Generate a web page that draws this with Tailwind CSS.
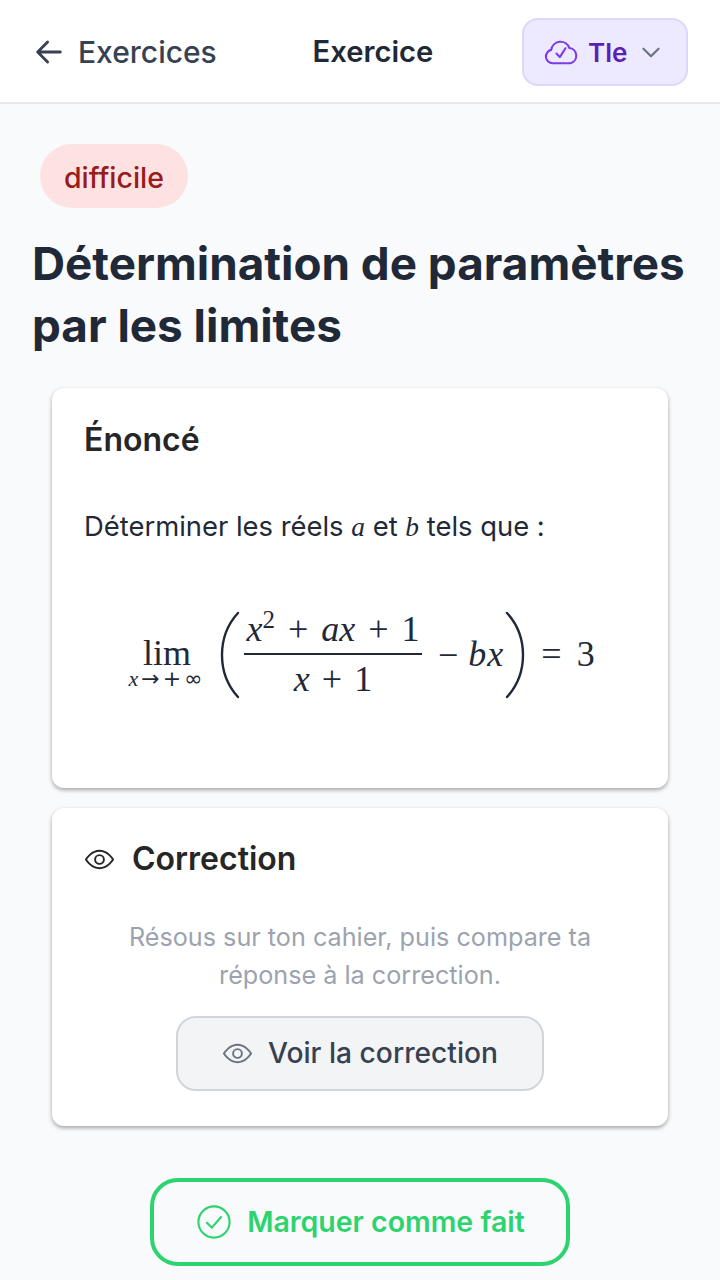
<!DOCTYPE html>
<html lang="fr">
<head>
    <meta charset="UTF-8">
    <meta name="viewport" content="width=device-width,initial-scale=1.0">
    <title>Exercice</title>
    <script src="https://cdn.jsdelivr.net/npm/@tailwindcss/browser@4"></script>
</head>
<body class="bg-[#f9fafb] font-['Inter',sans-serif] w-[720px] h-[1280px] overflow-hidden">
<header class="h-[104px] bg-white border-b-2 border-[#e5e7eb] flex items-center justify-between px-[32px] pt-[2px]">
    <div class="flex items-center gap-[12px] text-[#374151] w-[190px]">
        <svg class="w-[34px] h-[34px] shrink-0" viewBox="0 0 24 24" fill="none" stroke="currentColor" stroke-width="2" stroke-linecap="round" stroke-linejoin="round"><path d="M20 12H4.5M11 5l-7 7 7 7"/></svg>
        <span class="text-[30px] font-medium whitespace-nowrap">Exercices</span>
    </div>
    <span class="text-[29.200px] font-semibold text-[#1f2937] ml-[2px]">Exercice</span>
    <div class="w-[166px] h-[68px] rounded-[16px] bg-[#ede9fe] border-2 border-[#ddd6fe] flex items-center pl-[19px]">
        <svg class="w-[36px] h-[36px] shrink-0 text-[#7c3aed]" viewBox="0 0 24 24" fill="none" stroke="currentColor" stroke-width="1.4" stroke-linecap="round" stroke-linejoin="round"><path d="M6.500 19.500a4.500 4.500 0 0 1-1-8.900 6.200 6.200 0 0 1 12-1.300 5.200 5.200 0 0 1 .8 10.200H6.500z"/><path d="M9 13l2.200 2.400L15 9.500"/></svg>
        <span class="ml-[9px] text-[26px] font-semibold text-[#5b21b6]">Tle</span>
        <svg class="w-[26px] h-[26px] ml-[11px] text-[#6b7280]" viewBox="0 0 24 24" fill="none" stroke="currentColor" stroke-width="2" stroke-linecap="round" stroke-linejoin="round"><path d="M5 9l7 7 7-7"/></svg>
    </div>
</header>
<main class="pt-[40px]">
    <div class="pl-[40px]">
        <span class="inline-flex items-center justify-center w-[148px] h-[64px] pt-[4px] rounded-full bg-[#fee2e2] text-[#991b1b] text-[28.500px] font-medium">difficile</span>
    </div>
    <h1 class="mt-[25px] px-[32px] text-[45.800px] leading-[62px] font-bold text-[#1f2937] whitespace-nowrap">Détermination de paramètres<br>par les limites</h1>
    <section class="mt-[31px] mx-[52px] h-[400px] bg-white rounded-[12px] shadow-[0_2px_4px_rgba(0,0,0,0.35)] px-[33px] pt-[32px]">
        <h2 class="text-[32px] leading-[40px] font-semibold text-[#262626] ml-[-1px]">Énoncé</h2>
        <p class="mt-[46px] text-[27.400px] leading-[40px] text-[#1f2937] ml-[-1px]">Déterminer les réels <i class="font-['Liberation_Serif',serif]">a</i> et <i class="font-['Liberation_Serif',serif]">b</i> tels que :</p>
        <div class="mt-[64px] h-[88px] flex items-center text-[#1f2937] font-['Liberation_Serif',serif] text-[36px] leading-none whitespace-nowrap ml-[41px]">
            <div class="flex flex-col items-center w-[82px] pt-[18px]">
                <span class="leading-[30px]">lim</span>
                <span class="text-[22px] leading-[22px] font-['DejaVu_Sans',sans-serif] tracking-[3px]"><i class="font-['Liberation_Serif',serif]">x</i>→+∞</span>
            </div>
            <svg class="w-[20px] h-[88px] ml-[12px] shrink-0" viewBox="0 0 20 88" fill="none" stroke="currentColor" stroke-width="2.400" stroke-linecap="round"><path d="M18 2C7 14 2 28 2 44s5 30 16 42"/></svg>
            <div class="flex flex-col items-center w-[178px] ml-[4px]">
                <div class="h-[44px] w-full flex items-start justify-center border-b-2 border-[#1f2937]"><i>x</i><span class="text-[25px] mt-[-4px]">2</span><span class="mx-[13px]">+</span><i>ax</i><span class="mx-[13px]">+</span>1</div>
                <div class="h-[44px] w-full flex items-end justify-center pb-[2px]"><i>x</i><span class="mx-[12px]">+</span>1</div>
            </div>
            <span class="ml-[16px]">−</span>
            <span class="ml-[10px] mb-[2px] tracking-[1px] w-[37px]"><i>bx</i></span>
            <svg class="w-[20px] h-[88px] shrink-0" viewBox="0 0 20 88" fill="none" stroke="currentColor" stroke-width="2.400" stroke-linecap="round"><path d="M2 2c11 12 16 26 16 42S13 74 2 86"/></svg>
            <span class="ml-[16px] mb-[3px]">=</span>
            <span class="ml-[15px] mb-[3px]">3</span>
        </div>
    </section>
    <section class="mt-[20px] mx-[52px] h-[318px] bg-white rounded-[12px] shadow-[0_2px_4px_rgba(0,0,0,0.35)] px-[32px] pt-[31px]">
        <h2 class="flex items-center gap-[17px] text-[32px] leading-[40px] font-semibold text-[#262626]">
            <svg class="w-[31px] h-[31px] shrink-0" viewBox="0 0 24 24" fill="none" stroke="currentColor" stroke-width="1.500" stroke-linecap="round" stroke-linejoin="round"><path d="M1.500 12S5.500 5.200 12 5.200 22.500 12 22.500 12 18.500 18.800 12 18.800 1.500 12 1.500 12z"/><circle cx="12" cy="12" r="3.400"/></svg>
            Correction
        </h2>
        <p class="mt-[39px] text-center text-[25.200px] leading-[38px] text-[#9ca3af]">Résous sur ton cahier, puis compare ta<br>réponse à la correction.</p>
        <div class="mt-[22px] mx-auto w-[368px] h-[75px] rounded-[20px] bg-[#f3f4f6] border-2 border-[#d1d5db] flex items-center justify-center gap-[15px] text-[#374151]">
            <svg class="w-[31px] h-[31px] shrink-0 text-[#6b7280]" viewBox="0 0 24 24" fill="none" stroke="currentColor" stroke-width="1.500" stroke-linecap="round" stroke-linejoin="round"><path d="M1.500 12S5.500 5.200 12 5.200 22.500 12 22.500 12 18.500 18.800 12 18.800 1.500 12 1.500 12z"/><circle cx="12" cy="12" r="3.400"/></svg>
            <span class="text-[28.200px] font-medium">Voir la correction</span>
        </div>
    </section>
    <div class="mt-[52px] mx-auto w-[420px] h-[88px] rounded-[28px] border-[4px] border-[#2dd36f] flex items-center justify-center gap-[16px] pl-[2px] text-[#2dd36f]">
        <svg class="w-[34px] h-[34px] shrink-0" viewBox="0 0 24 24" fill="none" stroke="currentColor" stroke-width="1.500" stroke-linecap="round" stroke-linejoin="round"><circle cx="12" cy="12" r="11"/><path d="M7 12.500l3.500 3.500L17 8.500"/></svg>
        <span class="text-[28.500px] font-semibold">Marquer comme fait</span>
    </div>
</main>
</body>
</html>
